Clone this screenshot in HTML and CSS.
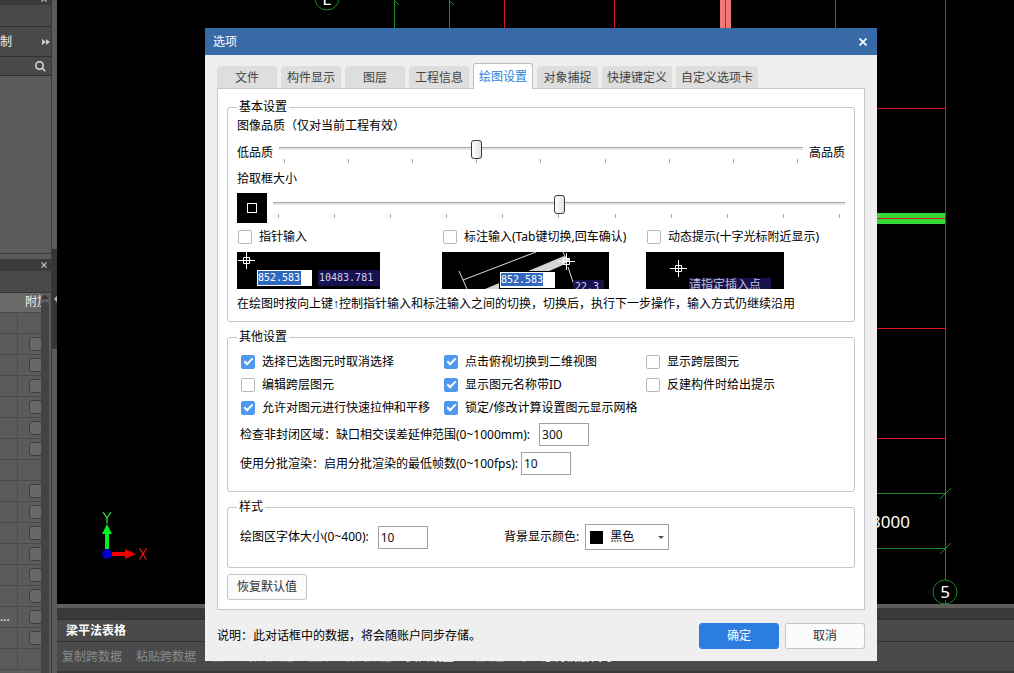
FILE: index.html
```html
<!DOCTYPE html>
<html lang="zh-CN">
<head>
<meta charset="utf-8">
<title>选项</title>
<link rel="stylesheet" href="styles.css">
</head>
<body>
<div class="app">
  <aside class="side">
    <div class="side-main">
      <div class="dock-title dock-title-cut"><svg class="x" viewBox="0 0 7 7"><path d="M0.5 0.5L6.5 6.5M6.5 0.5L0.5 6.5"/></svg></div>
      <div class="dock-strip"></div>
      <div class="dock-tools"><span>制</span><svg class="more" viewBox="0 0 8 6"><path d="M0 0L4 3L0 6ZM4 0L8 3L4 6Z"/></svg></div>
      <div class="dock-search"><svg class="lens" viewBox="0 0 11 11"><circle cx="4.5" cy="4.5" r="3.7"/><path d="M7.3 7.3L10.3 10.3"/></svg></div>
      <div class="dock-tree"></div>
      <div class="dock-title"><svg class="x" viewBox="0 0 7 7"><path d="M0.5 0.5L6.5 6.5M6.5 0.5L0.5 6.5"/></svg></div>
      <div class="dock-gap"></div>
      <div class="props">
        <table class="prop-table">
          <thead><tr><th></th><th>附加</th></tr></thead>
          <tbody>
            <tr><td></td><td></td></tr>
            <tr><td></td><td><input type="checkbox" aria-label="附加"></td></tr>
            <tr><td></td><td><input type="checkbox" aria-label="附加"></td></tr>
            <tr><td></td><td><input type="checkbox" aria-label="附加"></td></tr>
            <tr><td></td><td><input type="checkbox" aria-label="附加"></td></tr>
            <tr><td></td><td><input type="checkbox" aria-label="附加"></td></tr>
            <tr><td></td><td><input type="checkbox" aria-label="附加"></td></tr>
            <tr><td></td><td></td></tr>
            <tr><td></td><td><input type="checkbox" aria-label="附加"></td></tr>
            <tr><td></td><td><input type="checkbox" aria-label="附加"></td></tr>
            <tr><td></td><td><input type="checkbox" aria-label="附加"></td></tr>
            <tr><td></td><td><input type="checkbox" aria-label="附加"></td></tr>
            <tr><td></td><td><input type="checkbox" aria-label="附加"></td></tr>
            <tr><td></td><td><input type="checkbox" aria-label="附加"></td></tr>
            <tr><td>...</td><td><input type="checkbox" aria-label="附加"></td></tr>
            <tr><td></td><td><input type="checkbox" aria-label="附加"></td></tr>
            <tr><td></td><td></td></tr>
          </tbody>
        </table>
        <div class="scroll"><svg viewBox="0 0 8 5"><path d="M0 5L4 1L8 5Z"/></svg><div class="scroll-thumb"></div></div>
      </div>
    </div>
    <div class="splitter">
      <div class="grip"><svg viewBox="0 0 3 6"><path d="M3 0L0 3L3 6Z"/></svg></div>
    </div>
  </aside>

  <main class="work">
    <svg class="drawing" aria-hidden="true">
      <g transform="translate(-57 0)">
        <g class="axis">
          <circle cx="327" cy="-2" r="12"/>
          <path d="M394.5 0V30M449.5 0V30M394 0L399 5M449 0L454 5"/>
          <path d="M945.5 438V580M870 493.5H945M870 548.5H945M940 499L951 488M940 554L951 543M945.5 600V604"/>
          <circle cx="945" cy="592" r="12"/>
        </g>
        <rect class="beam-pink" x="720" y="0" width="11" height="30"/>
        <rect class="beam-green" x="870" y="213" width="75" height="11"/>
        <path class="grid" d="M504.5 0V30M614.5 0V30M725.5 0V30M835.5 0V30M945.5 0V438M870 108.5H945M870 218.5H945M870 328.5H945M870 438.5H945"/>
        <text class="cad" x="327" y="5" text-anchor="middle">E</text>
        <text class="cad" x="945" y="598" text-anchor="middle">5</text>
        <text class="cad" x="910" y="528" text-anchor="end">3000</text>
        <path class="ucs-y" d="M105 549V534H102L107 524L112 534H109V549Z"/>
        <path class="ucs-x" d="M112 552H125V549L136 554L125 559V556H112Z"/>
        <circle class="ucs-o" cx="107" cy="554" r="5"/>
        <path class="mark-y" d="M103 512L107 518V523.500M111 512L107 518"/>
        <path class="mark-x" d="M139.500 548.500L146.500 559.500M146.500 548.500L139.500 559.500"/>
      </g>
    </svg>
    <section class="bottom">
      <div class="bottom-bar"></div>
      <h2 class="bottom-title">梁平法表格</h2>
      <div class="bottom-tools">
        <button disabled>复制跨数据</button><button disabled>粘贴跨数据</button><button disabled>输入当前列数据</button><button disabled>删除当前列数据</button><button>页面设置</button><button disabled>调换起始跨</button><button>悬臂钢筋代号</button>
      </div>
    </section>
  </main>
</div>

<div class="dialog" role="dialog" aria-labelledby="dlg-title">
  <header class="dlg-head">
    <h1 id="dlg-title">选项</h1>
    <button class="close" aria-label="关闭"><svg viewBox="0 0 8 8"><path d="M0.500 0.500L7.500 7.500M7.500 0.500L0.500 7.500"/></svg></button>
  </header>
  <div class="dlg-body">
    <nav class="tabs" role="tablist">
      <button class="tab" role="tab">文件</button>
      <button class="tab" role="tab">构件显示</button>
      <button class="tab" role="tab">图层</button>
      <button class="tab" role="tab">工程信息</button>
      <button class="tab tab-on" role="tab" aria-selected="true">绘图设置</button>
      <button class="tab" role="tab">对象捕捉</button>
      <button class="tab" role="tab">快捷键定义</button>
      <button class="tab" role="tab">自定义选项卡</button>
    </nav>
    <div class="panel">
      <fieldset class="group basic">
        <legend>基本设置</legend>
        <label class="line" for="quality">图像品质（仅对当前工程有效）</label>
        <div class="slide-row quality-row">
          <span>低品质</span>
          <div class="slider">
            <input id="quality" type="range" min="0" max="8" value="3">
            <div class="ticks"><i></i><i></i><i></i><i></i><i></i><i></i><i></i><i></i><i></i></div>
          </div>
          <span>高品质</span>
        </div>
        <label class="line" for="pick">拾取框大小</label>
        <div class="slide-row pick-row">
          <div class="pickbox"></div>
          <div class="slider">
            <input id="pick" type="range" min="0" max="10" value="5">
            <div class="ticks"><i></i><i></i><i></i><i></i><i></i><i></i><i></i><i></i><i></i><i></i><i></i></div>
          </div>
        </div>
        <div class="modes">
          <div class="mode">
            <label class="check"><input type="checkbox">指针输入</label>
            <svg class="preview" width="143" height="37">
              <rect class="k" width="143" height="37"/>
              <path class="w" d="M1 8.500H18M9.500 0V17M6.500 5.500H12.500V11.500H6.500Z"/>
              <rect class="white" x="20" y="18" width="55" height="16"/>
              <rect class="sel" x="21" y="19" width="43" height="14"/>
              <rect class="navy" x="81" y="18" width="62" height="16"/>
              <text class="num" x="21" y="29">852.583</text>
              <text class="num dim" x="82" y="29">10483.781</text>
            </svg>
          </div>
          <div class="mode">
            <label class="check"><input type="checkbox">标注输入(Tab键切换,回车确认)</label>
            <svg class="preview" width="167" height="37">
              <rect class="k" width="167" height="37"/>
              <path class="band" d="M43 37L122 4L128 8L121 13L66 37Z"/>
              <path class="thin" d="M17 19L25 37M21 28L94 0M121 0L124 6M126 15L132 33"/>
              <path class="w" d="M116 9.500H133M124.500 1V18M121.500 6.500H127.500V12.500H121.500Z"/>
              <rect class="k" x="57" y="19" width="57" height="18"/>
              <rect class="white" x="58" y="20" width="55" height="16"/>
              <rect class="sel" x="59" y="21" width="42" height="13"/>
              <rect class="navy" x="131" y="28" width="31" height="9"/>
              <text class="num" x="59" y="31">852.583</text>
              <text class="num dim" x="133" y="38">22.3</text>
            </svg>
          </div>
          <div class="mode">
            <label class="check"><input type="checkbox">动态提示(十字光标附近显示)</label>
            <svg class="preview" width="138" height="37">
              <rect class="k" width="138" height="37"/>
              <path class="w" d="M24 16.500H41M32.500 8V25M29.500 13.500H35.500V19.500H29.500Z"/>
              <rect class="navy" x="43" y="26" width="82" height="11"/>
              <text class="tip" x="43" y="37">请指定插入点</text>
            </svg>
          </div>
        </div>
        <p class="line hint">在绘图时按向上键<span class="arrow">↑</span>控制指针输入和标注输入之间的切换，切换后，执行下一步操作，输入方式仍继续沿用</p>
      </fieldset>

      <fieldset class="group other">
        <legend>其他设置</legend>
        <div class="checks">
          <label class="check"><input type="checkbox" checked>选择已选图元时取消选择</label>
          <label class="check"><input type="checkbox" checked>点击俯视切换到二维视图</label>
          <label class="check"><input type="checkbox">显示跨层图元</label>
          <label class="check"><input type="checkbox">编辑跨层图元</label>
          <label class="check"><input type="checkbox" checked>显示图元名称带ID</label>
          <label class="check"><input type="checkbox">反建构件时给出提示</label>
          <label class="check"><input type="checkbox" checked>允许对图元进行快速拉伸和平移</label>
          <label class="check"><input type="checkbox" checked>锁定/修改计算设置图元显示网格</label>
        </div>
        <div class="field spaced"><label for="gap">检查非封闭区域：缺口相交误差延伸范围(0~1000mm):</label><input id="gap" type="text" value="300"></div>
        <div class="field"><label for="fps">使用分批渲染：启用分批渲染的最低帧数(0~100fps):</label><input id="fps" type="text" value="10"></div>
      </fieldset>

      <fieldset class="group look">
        <legend>样式</legend>
        <div class="look-row">
          <div class="field spaced"><label for="size">绘图区字体大小(0~400):</label><input id="size" type="text" value="10"></div>
          <div class="field color-field"><label for="bg">背景显示颜色:</label><span class="combo"><select id="bg"><option>黑色</option></select></span></div>
        </div>
      </fieldset>
      <button class="btn">恢复默认值</button>
    </div>
    <footer class="dlg-foot">
      <p>说明：此对话框中的数据，将会随账户同步存储。</p>
      <button class="btn primary">确定</button>
      <button class="btn">取消</button>
    </footer>
  </div>
</div>
</body>
</html>
```
FILE: styles.css
```css
*, *::before, *::after { box-sizing: border-box; }
body, h1, h2, p { margin: 0; }
body, button, input, select {
  font: 12px/16px "Noto Sans", "Noto Sans CJK SC", sans-serif;
}
body { background: #000; overflow: hidden; }
button { border: 0; padding: 0; background: none; white-space: nowrap; }

.app { display: grid; grid-template-columns: 57px 1fr; height: 100vh; }

/* left docks */
.side { display: flex; min-height: 0; overflow: hidden; background: #5b5b5b; color: #eee; }
.side-main { flex: 1; display: flex; flex-direction: column; min-width: 0; border-right: 1px solid #3a3a3a; }
.side-main > div { flex: none; }
.dock-title { height: 12px; background: #3a3a3a; display: flex; align-items: center; justify-content: flex-end; padding-right: 4px; }
.dock-title-cut { height: 5px; align-items: flex-end; padding-bottom: 3px; overflow: hidden; }
.x { width: 6px; height: 6px; flex: none; fill: none; stroke: #ccc; stroke-width: 1.3; }
.dock-strip, .dock-tools, .dock-search { background: #494949; border-bottom: 1px solid #303030; }
.dock-strip { height: 22px; }
.dock-tools { height: 30px; display: flex; align-items: center; justify-content: space-between; padding-right: 1px; }
.more { width: 8px; height: 6px; fill: #ccc; }
.dock-search { height: 19px; display: flex; align-items: center; justify-content: flex-end; padding-right: 5px; }
.lens { width: 11px; height: 11px; fill: none; stroke: #ddd; stroke-width: 1.5; }
.dock-tree { height: 183px; box-shadow: inset 0 -5px #5b5b5b, inset 0 -6px #3a3a3a; }
.dock-gap { height: 22px; background: #494949; border-bottom: 1px solid #383838; }
.side-main > .props { flex: 1; display: flex; min-height: 0; overflow: hidden; }
.prop-table { width: 41px; table-layout: fixed; border-collapse: collapse; align-self: flex-start; }
.prop-table th, .prop-table td { height: 21px; padding: 0; border-bottom: 1px solid #4a4a4a; overflow: hidden; white-space: nowrap; text-align: left; line-height: 14px; }
.prop-table th { height: 19px; background: #696969; font-weight: 400; }
.prop-table th:first-child { width: 17px; }
.prop-table th:last-child { padding-left: 8px; }
.prop-table td:first-child { border-right: 1px solid #4c4c4c; }
.prop-table input { appearance: none; display: block; width: 14px; height: 14px; margin: 0 0 0 11px; background: #686868; border: 1px solid #3e3e3e; border-radius: 3px; }
.scroll { width: 8px; padding-top: 1px; }
.scroll svg { display: block; width: 8px; height: 5px; fill: #333; margin-bottom: 3px; }
.scroll-thumb { height: 100%; background: #434343; border-radius: 4px 4px 0 0; }
.splitter { width: 5px; padding-top: 249px; }
.grip { height: 100px; display: flex; align-items: center; justify-content: flex-end; background: #363636; }
.grip svg { width: 3px; height: 6px; fill: #bbb; }

/* drawing area */
.work { display: flex; flex-direction: column; min-width: 0; }
.drawing { flex: 1; width: 100%; min-height: 0; background: #000; }
.axis { fill: none; stroke: #1c8a26; }
.grid { fill: none; stroke: #e0141c; }
.beam-pink { fill: #f27878; }
.beam-green { fill: #35d835; }
.cad { fill: #fff; font-size: 17px; }
.ucs-y { fill: #00f020; }
.ucs-x { fill: #f00000; }
.ucs-o { fill: #0000c8; }
.mark-y { fill: none; stroke: #35e035; stroke-width: 1.3; }
.mark-x { fill: none; stroke: #f01818; stroke-width: 1.3; }

.bottom { border-top: 4px solid #5d5d5d; border-bottom: 2px solid #383838; background: #4a4a4a; }
.bottom-bar { height: 12px; background: #393939; border-bottom: 1px solid #303030; }
.bottom-title { height: 22px; padding-left: 9px; font-size: 12px; line-height: 21px; color: #fff; border-bottom: 1px solid #303030; }
.bottom-tools { display: flex; gap: 14px; height: 29px; padding-left: 5px; overflow: hidden; }
.bottom-tools button { color: #f0f0f0; }
.bottom-tools button:disabled { color: #8a8a8a; }

/* dialog window, floating over the drawing */
.dialog { position: absolute; left: 205px; right: 137px; top: 28px; background: #efefef; color: #000; }
.dlg-head { display: flex; align-items: center; justify-content: space-between; height: 27px; padding: 0 10px 0 8px; background: #376aa6; color: #fff; }
.dlg-head h1 { font-size: 12px; font-weight: 400; }
.close svg { display: block; width: 8px; height: 8px; fill: none; stroke: #fff; stroke-width: 1.7; }
.dlg-body { padding: 8px 12px 12px; }

.tabs { display: flex; align-items: flex-end; gap: 4px; }
.tab { min-width: 60px; height: 22px; padding: 2px 4px 0; background: #dedede; color: #444; border-radius: 3px 3px 0 0; }
.tab-on { position: relative; height: 26px; margin-bottom: -1px; padding-top: 0; background: #fff; color: #2c7fe0; border: 1px solid #b9bec8; border-bottom: 0; }
.tab-on ~ .tab { padding-left: 5px; padding-right: 5px; min-width: 61px; }
.panel { background: #fff; border: 1px solid #c3c6cc; padding: 10px 9px 9px; }

.group { min-width: 0; margin: 0 0 7px; padding: 0 9px; border: 1px solid #c3c6cc; border-radius: 3px; }
.group legend { padding: 0 2px; }
.line { display: block; height: 16px; white-space: nowrap; }
.basic { padding-top: 3px; padding-bottom: 9px; }
.slide-row { display: flex; }
.quality-row { gap: 6px; padding: 6px 0 8px; }
.quality-row span { padding-top: 5px; white-space: nowrap; }
.slider { flex: 1; min-width: 0; }
.slider input { appearance: none; display: block; width: 100%; height: 19px; margin: 0; background: linear-gradient(#a5a5a5 0 1px, #e4e4e4 1px 3px) 0 7px / 100% 3px no-repeat; }
.slider input::-webkit-slider-thumb { appearance: none; width: 11px; height: 19px; border: 1px solid #3c3c3c; border-radius: 3px; background: linear-gradient(90deg, #fff, #e2e2e2); }
.ticks { display: flex; justify-content: space-between; padding: 0 5px; height: 4px; }
.ticks i { width: 1px; background: #a8a8a8; }
.pick-row { gap: 6px; padding: 6px 0 7px; }
.pick-row .slider { padding-top: 2px; }
.pickbox { display: grid; place-items: center; width: 30px; height: 30px; background: #000; }
.pickbox::after { content: ""; width: 10px; height: 10px; border: 1px solid #fff; }

.modes { display: grid; grid-template-columns: 205px 204px 1fr; }
.check { display: flex; align-items: center; gap: 7px; height: 14px; padding-left: 1px; white-space: nowrap; }
.check input { appearance: none; flex: none; display: grid; place-items: center; width: 14px; height: 14px; margin: 0; border: 1px solid #b4b8c0; border-radius: 2px; background: #fff; }
.check input:checked { background: #4f98ee; border-color: #4f98ee; }
.check input:checked::after { content: ""; width: 9px; height: 5px; margin-bottom: 3px; border: solid #fff; border-width: 0 0 2px 2px; transform: rotate(-45deg); }
.preview { display: block; margin-top: 8px; }
.k { fill: #000; }
.w { fill: none; stroke: #fff; }
.white { fill: #fff; }
.sel { fill: #3068c0; }
.navy { fill: #17124f; }
.band { fill: #d4d4d4; }
.thin { fill: none; stroke: #ddd; }
.num { font: 10px "DejaVu Sans Mono", monospace; fill: #fff; }
.dim { fill: #d4d0f0; }
.tip { font-size: 12px; fill: #c4c4cc; }
.hint { margin-top: 7px; }
.arrow { font-family: "Liberation Sans", sans-serif; }

.other { padding: 10px 12px 16px; }
.other legend, .look legend { margin-left: -3px; }
.checks { display: grid; grid-template-columns: 203px 202px 1fr; row-gap: 9px; margin-bottom: 8px; }
.field { display: flex; align-items: center; gap: 3px; white-space: nowrap; }
.field.spaced { gap: 9px; }
.field.color-field { gap: 6px; }
.other .field + .field { margin-top: 6px; }
.field input { width: 50px; height: 23px; padding: 0 2px; border: 1px solid #a0a0a0; background: #fff; color: #111; }
.look { padding: 9px 12px 17px; margin-bottom: 6px; }
.look-row { display: grid; grid-template-columns: 264px 1fr; }
.combo { position: relative; }
.combo select { appearance: none; display: block; width: 84px; height: 26px; padding: 0 0 0 24px; border: 1px solid #a0a0a0; border-radius: 0; color: #000; background: linear-gradient(#000, #000) 4px 6px / 13px 13px no-repeat #fff; }
.combo::after { content: ""; position: absolute; right: 5px; top: 12px; border: solid transparent; border-width: 3px 3px 0; border-top-color: #555; pointer-events: none; }
.btn { display: block; width: 80px; height: 26px; border: 1px solid #c3c6cc; border-radius: 3px; background: #fbfbfb; color: #333; }
.primary { background: #2b7de1; border-color: #2b7de1; color: #fff; }
.dlg-foot { display: flex; align-items: center; gap: 6px; padding-top: 13px; }
.dlg-foot p { flex: 1; }
```
